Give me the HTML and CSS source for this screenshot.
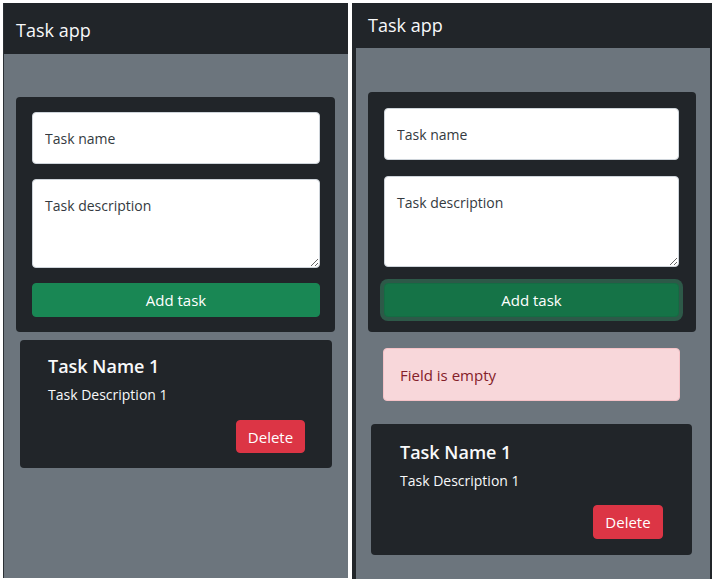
FILE: index.html
```html
<!DOCTYPE html>
<html lang="en">
<head>
<meta charset="utf-8">
<title>Task app</title>
<link rel="stylesheet" href="styles.css">
</head>
<body>
<div class="screens">
  <section class="phone phone-a">
    <header class="topbar">Task app</header>
    <main class="content">
      <form class="form-card">
        <input class="field" type="text" placeholder="Task name">
        <textarea class="field area" placeholder="Task description"></textarea>
        <button type="button" class="btn-add">Add task</button>
      </form>
      <div class="task-card">
        <h5 class="task-title">Task Name 1</h5>
        <p class="task-desc">Task Description 1</p>
        <div class="task-actions"><button type="button" class="btn-del">Delete</button></div>
      </div>
    </main>
  </section>
  <section class="phone phone-b">
    <header class="topbar">Task app</header>
    <main class="content">
      <form class="form-card">
        <input class="field" type="text" placeholder="Task name">
        <textarea class="field area" placeholder="Task description"></textarea>
        <button type="button" class="btn-add focused">Add task</button>
      </form>
      <div class="alert">Field is empty</div>
      <div class="task-card">
        <h5 class="task-title">Task Name 1</h5>
        <p class="task-desc">Task Description 1</p>
        <div class="task-actions"><button type="button" class="btn-del">Delete</button></div>
      </div>
    </main>
  </section>
</div>
</body>
</html>
```
FILE: styles.css
```css
* { box-sizing: border-box; }
html, body { margin: 0; padding: 0; background: #fff; }
body { font-family: "Open Sans", "Noto Sans", sans-serif; color: #212529; }

.screens {
  display: flex;
  align-items: flex-start;
  padding: 3px 0 0 3px;
  gap: 4px;
}

.phone {
  background: #6c757d;
  display: flex;
  flex-direction: column;
}
.phone-a { width: 345px; height: 575px; border-left: 1px solid #2b3035; }
.phone-b { width: 360px; height: 576px; border-left: 4px solid #212529; border-right: 2px solid #212529; }

.topbar {
  background: #212529;
  color: #f8f9fa;
  font-size: 18px;
  display: flex;
  align-items: center;
  padding-left: 12px;
}
.phone-a .topbar { height: 51px; padding-top: 2px; }
.phone-b .topbar { height: 45px; padding-top: 0; padding-bottom: 2px; }

.content { display: flex; flex-direction: column; }
.phone-a .content { padding: 43px 0 0 12px; }
.phone-b .content { padding: 44px 0 0 12px; }

.form-card {
  background: #212529;
  border-radius: 4px;
  display: flex;
  flex-direction: column;
  margin: 0;
}
.phone-a .form-card { width: 319px; padding: 15px 15px 15px 16px; gap: 15px; }
.phone-b .form-card { width: 328px; padding: 16px 17px 15px 16px; gap: 16px; }

.field {
  display: block;
  width: 100%;
  height: 52px;
  border: 1px solid #ced4da;
  border-radius: 4px;
  background: #fff;
  font-family: inherit;
  font-size: 14px;
  color: #212529;
  padding: 0 12px;
  margin: 0;
  outline: none;
}
.field::placeholder { color: #343a40; opacity: 1; }
.area { padding: 16px 12px; resize: vertical; }
.phone-a .area { height: 89px; }
.phone-b .area { height: 91px; }

.btn-add {
  display: block;
  width: 100%;
  height: 34px;
  border: 1px solid #198754;
  border-radius: 4px;
  background: #198754;
  color: #fff;
  font-family: inherit;
  font-size: 15px;
  padding: 0;
}
.btn-add.focused {
  background: #157347;
  border-color: #146c43;
  box-shadow: 0 0 0 4px rgba(60, 153, 110, 0.45);
}

.alert {
  background: #f8d7da;
  border: 1px solid #f5c2c7;
  color: #842029;
  border-radius: 4px;
  width: 297px;
  height: 53px;
  margin: 16px 0 0 15px;
  padding: 0 16px;
  display: flex;
  align-items: center;
  font-size: 15px;
}

.task-card {
  background: #212529;
  border-radius: 4px;
  color: #f8f9fa;
  display: flex;
  flex-direction: column;
}
.phone-a .task-card { width: 312px; height: 128px; margin: 8px 0 0 4px; padding: 14px 27px 15px 28px; }
.phone-b .task-card { width: 321px; height: 131px; margin: 23px 0 0 3px; padding: 16px 29px 16px 29px; }

.task-title {
  margin: 0;
  font-size: 18px;
  font-weight: 600;
  line-height: 24px;
}
.task-desc {
  margin: 7px 0 0;
  font-size: 14px;
  line-height: 20px;
}
.task-actions { margin-top: auto; display: flex; justify-content: flex-end; }
.btn-del {
  background: #dc3545;
  border: 1px solid #dc3545;
  border-radius: 4px;
  color: #fff;
  font-family: inherit;
  font-size: 15px;
  width: 69px;
  height: 33px;
  padding: 0;
}
.phone-b .btn-del { width: 70px; height: 34px; }
```
